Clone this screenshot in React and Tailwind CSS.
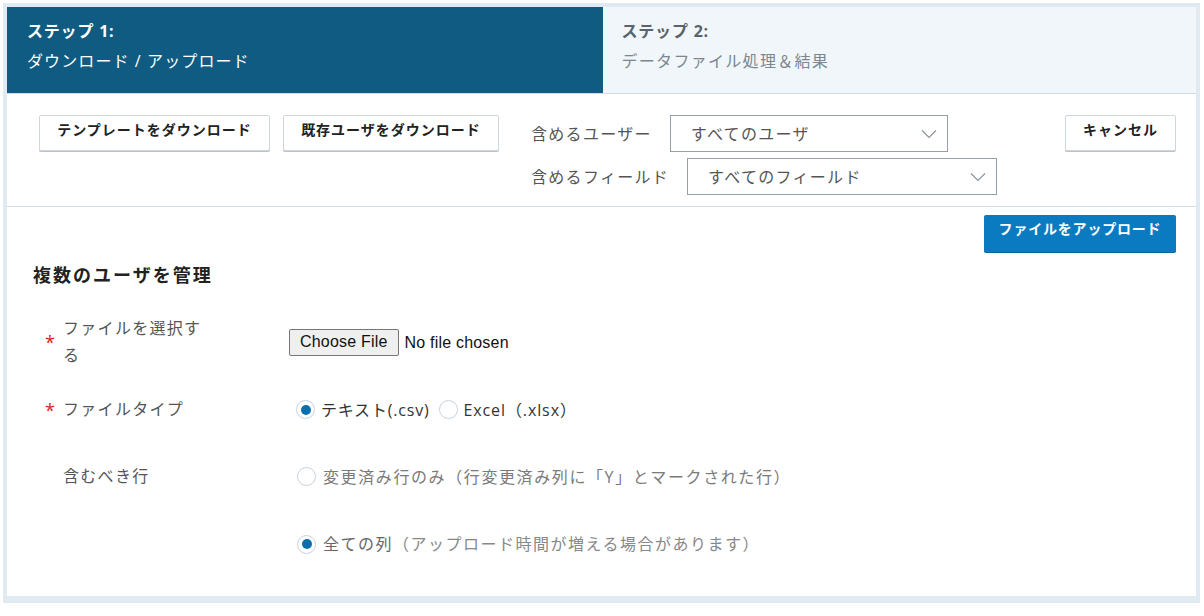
import React from 'react';

const Chevron = () => (
  <svg width="16" height="10" viewBox="0 0 16 10" className="text-[#8a949e]">
    <path d="M1 1.5 L8 8.5 L15 1.5" fill="none" stroke="currentColor" strokeWidth="1.2" />
  </svg>
);

const Radio = ({ checked }) => (
  <span className="flex h-[19px] w-[19px] shrink-0 items-center justify-center rounded-full border border-[#c8d2dc] bg-white">
    {checked && <span className="h-[10px] w-[10px] rounded-full bg-[#0b6fae]" />}
  </span>
);

const ToolButton = ({ children, className = '' }) => (
  <div
    className={`flex h-[36px] justify-center rounded-[2px] border border-[#cfd6dd] bg-white pt-[4px] text-[14px] font-bold leading-[20px] tracking-[1px] text-[#222] shadow-[0_1px_0_#b9c3cc] ${className}`}
  >
    {children}
  </div>
);

const SelectBox = ({ value, width }) => (
  <div className={`flex h-[37px] items-center justify-between border border-[#959fa9] bg-white pl-[20px] pr-[10px] ${width}`}>
    <span className="text-[16px] tracking-[1.3px] text-[#555]">{value}</span>
    <Chevron />
  </div>
);

const FormRow = ({ required, label, children, className = '' }) => (
  <div className={`flex items-center pl-[38px] ${className}`}>
    <span className="w-[18px] text-[18px] leading-none text-[#e02020]">{required ? '*' : ''}</span>
    <div className="w-[226px]">
      <div className="max-w-[142px] text-[16px] leading-[27px] tracking-[1.3px] text-[#555]">{label}</div>
    </div>
    <div className="flex items-center">{children}</div>
  </div>
);

export default function App() {
  return (
    <div className="p-[3px] font-['Open_Sans','Noto_Sans_CJK_JP',sans-serif]">
      <div className="w-[1197px] bg-[#e1e9f1] px-[4px] pt-[4px] pb-[7px]">
        <div className="bg-white">
          {/* steps */}
          <div className="flex border-b border-[#d3dce4]">
            <div className="h-[86px] w-1/2 bg-[#0f5b82] pl-[20px] pt-[12px] text-white">
              <div className="text-[16px] font-bold leading-[24px] tracking-[0.8px]">ステップ 1:</div>
              <div className="mt-[6px] text-[16px] leading-[24px] tracking-[1.1px]">ダウンロード / アップロード</div>
            </div>
            <div className="h-[86px] w-1/2 border-l border-[#0f5b82] bg-[#f0f6f9] pl-[19px] pt-[12px]">
              <div className="text-[16px] font-bold leading-[24px] tracking-[0.8px] text-[#58636d]">ステップ 2:</div>
              <div className="mt-[6px] text-[16px] leading-[24px] tracking-[1.3px] text-[#7c8690]">データファイル処理＆結果</div>
            </div>
          </div>

          {/* toolbar */}
          <div className="flex items-start border-b border-[#d3dce4] pl-[32px] pr-[20px] pt-[21px] pb-[11px]">
            <ToolButton className="w-[231px]">テンプレートをダウンロード</ToolButton>
            <ToolButton className="ml-[13px] w-[216px]">既存ユーザをダウンロード</ToolButton>
            <div className="ml-[32px] flex flex-col gap-[6px]">
              <div className="flex items-center gap-[18px]">
                <span className="text-[16px] tracking-[1.3px] text-[#555]">含めるユーザー</span>
                <SelectBox value="すべてのユーザ" width="w-[278px]" />
              </div>
              <div className="flex items-center gap-[18px]">
                <span className="text-[16px] tracking-[1.3px] text-[#555]">含めるフィールド</span>
                <SelectBox value="すべてのフィールド" width="w-[310px]" />
              </div>
            </div>
            <ToolButton className="ml-auto w-[111px]">キャンセル</ToolButton>
          </div>

          {/* main */}
          <div className="pb-[40px]">
            <div className="flex justify-end pr-[20px] pt-[8px]">
              <div className="flex h-[37px] w-[192px] justify-center rounded-[2px] bg-[#0a7bc0] pt-[4px] text-[14px] font-bold leading-[20px] tracking-[0.8px] text-white shadow-[0_1px_0_#07659e]">
                ファイルをアップロード
              </div>
            </div>
            <h2 className="mt-[10px] pl-[26px] text-[18px] font-bold leading-[26px] tracking-[2px] text-[#222]">複数のユーザを管理</h2>

            <FormRow required label="ファイルを選択する" className="mt-[27px]">
              <input
                type="file"
                className="font-['Liberation_Sans',sans-serif] text-[16px] tracking-[0.2px] text-[#111] file:mr-[6px] file:h-[27px] file:rounded-[2px] file:border file:border-[#767676] file:bg-[#efefef] file:px-[10px] file:text-[16px] file:text-[#111]"
              />
            </FormRow>

            <FormRow required label="ファイルタイプ" className="mt-[27px]">
              <label className="flex items-center gap-[6px] pl-[7px]">
                <Radio checked />
                <span className="text-[16px] tracking-[0.8px] text-[#333]">テキスト(.csv)</span>
              </label>
              <label className="ml-[10px] flex items-center gap-[5px]">
                <Radio />
                <span className="text-[16px] tracking-[0.9px] text-[#333]">Excel（.xlsx）</span>
              </label>
            </FormRow>

            <FormRow label="含むべき行" className="mt-[40px]">
              <label className="flex items-center gap-[7px] pl-[8px]">
                <Radio />
                <span className="text-[16px] tracking-[1.6px] text-[#7a7a7a]">
                  変更済み行のみ（行変更済み列に「Y」とマークされた行）
                </span>
              </label>
            </FormRow>

            <FormRow label="" className="mt-[42px]">
              <label className="flex items-center gap-[7px] pl-[8px]">
                <Radio checked />
                <span className="text-[16px] tracking-[1.5px] text-[#666]">
                  全ての列<span className="text-[#888]">（アップロード時間が増える場合があります）</span>
                </span>
              </label>
            </FormRow>
          </div>
        </div>
      </div>
    </div>
  );
}
